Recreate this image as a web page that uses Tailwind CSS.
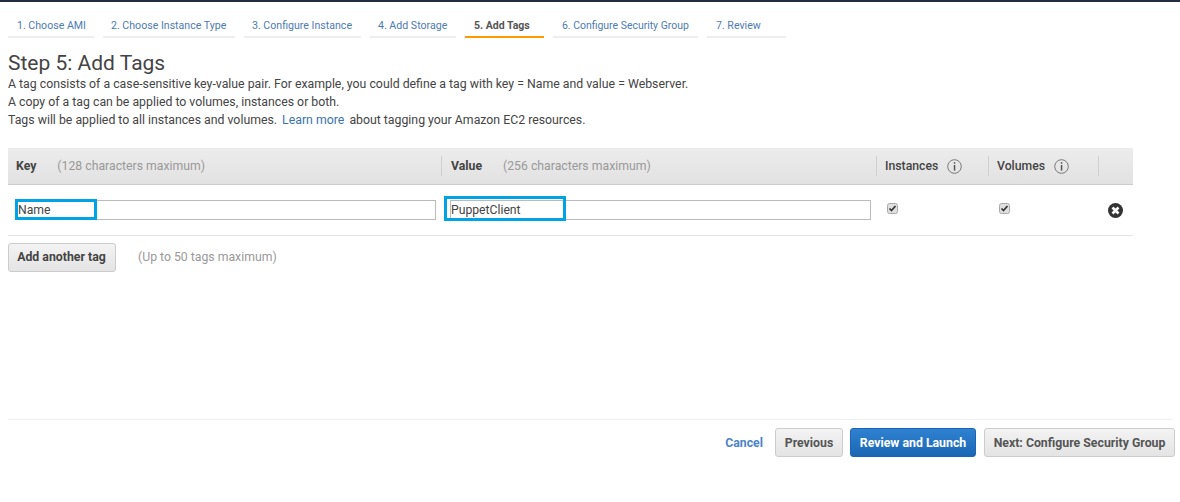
<!DOCTYPE html>
<html lang="en">
<head>
    <meta charset="UTF-8">
    <title>Step 5: Add Tags</title>
    <script src="https://cdn.jsdelivr.net/npm/@tailwindcss/browser@4"></script>
</head>
<body class="h-[502px] w-[1180px] overflow-hidden bg-white font-['Roboto',sans-serif] text-[#444]">
    <!-- Top bar -->
    <div class="h-[2px] bg-[#232f3e]"></div>

    <!-- Wizard steps -->
    <div class="flex gap-[9px] pl-[8px] pt-[10px] text-[10.6px]">
        <div class="h-[26px] w-[86px] border-b-2 border-[#eee] pl-[9px] pt-[7px] leading-[13px] text-[#4d7bb5]">1. Choose AMI</div>
        <div class="h-[26px] w-[132px] border-b-2 border-[#eee] pl-[8px] pt-[7px] leading-[13px] text-[#4d7bb5]">2. Choose Instance Type</div>
        <div class="h-[26px] w-[117px] border-b-2 border-[#eee] pl-[8px] pt-[7px] leading-[13px] text-[#4d7bb5]">3. Configure Instance</div>
        <div class="h-[26px] w-[86px] border-b-2 border-[#eee] pl-[8px] pt-[7px] leading-[13px] text-[#4d7bb5]">4. Add Storage</div>
        <div class="h-[26px] w-[79px] border-b-2 border-[#f90] pl-[9px] pt-[7px] text-[10.5px] font-bold leading-[13px] text-[#555]">5. Add Tags</div>
        <div class="h-[26px] w-[145px] border-b-2 border-[#eee] pl-[9px] pt-[7px] text-[10.45px] leading-[13px] text-[#4d7bb5]">6. Configure Security Group</div>
        <div class="h-[26px] w-[79px] border-b-2 border-[#eee] pl-[9px] pt-[7px] leading-[13px] text-[#4d7bb5]">7. Review</div>
    </div>

    <!-- Intro -->
    <div class="px-[8px]">
        <h1 class="mt-[13px] text-[21px] leading-[24px] text-[#444]">Step 5: Add Tags</h1>
        <p class="text-[12.3px] leading-[18px]">A tag consists of a case-sensitive key-value pair. For example, you could define a tag with key = Name and value = Webserver.</p>
        <p class="text-[12.3px] leading-[18px]">A copy of a tag can be applied to volumes, instances or both.</p>
        <p class="text-[12.3px] leading-[18px]">Tags will be applied to all instances and volumes. <a class="mx-[2px] text-[#3b73af]">Learn more</a> about tagging your Amazon EC2 resources.</p>
    </div>

    <!-- Tag table -->
    <div class="mx-[8px] mt-[19px] w-[1125px]">
        <div class="flex h-[37px] items-center border-b border-[#ccc] bg-gradient-to-b from-[#ececec] to-[#e2e2e2] text-[12.25px]">
            <div class="flex h-[20px] w-[433px] items-center pl-[8px]">
                <span class="font-bold">Key</span><span class="ml-[21px] text-[#999]">(128 characters maximum)</span>
            </div>
            <div class="flex h-[20px] w-[435px] items-center border-l border-[#d0d0d0] pl-[9px]">
                <span class="font-bold">Value</span><span class="ml-[21px] text-[#999]">(256 characters maximum)</span>
            </div>
            <div class="flex h-[20px] w-[112px] items-center gap-[9px] border-l border-[#d0d0d0] pl-[8px]">
                <span class="font-medium">Instances</span>
                <svg class="h-[15px] w-[15px]" viewBox="0 0 15 15" fill="none"><circle cx="7.5" cy="7.5" r="6.8" stroke="#777"/><rect x="6.8" y="3.2" width="1.5" height="1.6" fill="#555"/><rect x="6.8" y="6" width="1.5" height="5.6" fill="#555"/></svg>
            </div>
            <div class="flex h-[20px] w-[110px] items-center gap-[9px] border-l border-[#d0d0d0] pl-[8px]">
                <span class="font-medium">Volumes</span>
                <svg class="h-[15px] w-[15px]" viewBox="0 0 15 15" fill="none"><circle cx="7.5" cy="7.5" r="6.8" stroke="#777"/><rect x="6.8" y="3.2" width="1.5" height="1.6" fill="#555"/><rect x="6.8" y="6" width="1.5" height="5.6" fill="#555"/></svg>
            </div>
            <div class="h-[20px] border-l border-[#d0d0d0]"></div>
        </div>

        <div class="relative flex h-[51px] items-center border-b border-[#e4e4e4]">
            <div class="ml-[8px] mt-[-1px] h-[20px] w-[420px] border border-[#bbb] pl-[1px] text-[12.2px] leading-[18px]">Name</div>
            <div class="ml-[14px] mt-[-1px] h-[20px] w-[421px] border border-[#bbb] text-[12.2px] leading-[18px]">PuppetClient</div>

            <!-- Annotation boxes -->
            <div class="absolute left-[7px] top-[14px] h-[21px] w-[82px] border-[3px] border-[#00a4e4]"></div>
            <div class="absolute left-[436px] top-[11px] h-[25px] w-[122px] border-[3px] border-[#00a4e4]"></div>

            <svg class="ml-[16px] mt-[-4px] h-[11px] w-[11px]" viewBox="0 0 11 11"><rect x=".5" y=".5" width="10" height="10" rx="2" fill="#e0e0e0" stroke="#aaa"/><path d="M2.5 5.5l2 2 4-4.5" fill="none" stroke="#333" stroke-width="1.7"/></svg>
            <svg class="ml-[101px] mt-[-4px] h-[11px] w-[11px]" viewBox="0 0 11 11"><rect x=".5" y=".5" width="10" height="10" rx="2" fill="#e0e0e0" stroke="#aaa"/><path d="M2.5 5.5l2 2 4-4.5" fill="none" stroke="#333" stroke-width="1.7"/></svg>
            <svg class="ml-[98px] mt-[1px] h-[15px] w-[15px]" viewBox="0 0 15 15"><circle cx="7.5" cy="7.5" r="7.5" fill="#333"/><path d="M4.5 4.5l6 6M10.5 4.5l-6 6" stroke="#fff" stroke-width="2.6"/></svg>
        </div>

        <div class="mt-[7px] flex items-center">
            <button class="h-[29px] w-[108px] rounded-[3px] border border-[#ccc] bg-gradient-to-b from-[#f3f3f3] to-[#e4e4e4] pr-[1px] text-[12.3px] font-bold text-[#444]">Add another tag</button>
            <span class="ml-[22px] text-[12.25px] text-[#999]">(Up to 50 tags maximum)</span>
        </div>
    </div>

    <!-- Footer actions -->
    <div class="mx-[8px] mt-[147px] flex items-center justify-end border-t border-[#eee] pt-[8px] text-[12.3px] font-bold">
        <a class="mr-[12px] pt-[1px] text-[#4d84c9]">Cancel</a>
        <button class="h-[29px] w-[68px] rounded-[3px] border border-[#ccc] bg-gradient-to-b from-[#f3f3f3] to-[#e4e4e4] pt-[1px] text-[#555]">Previous</button>
        <button class="ml-[7px] h-[29px] w-[126px] rounded-[3px] border border-[#1a66b5] bg-gradient-to-b from-[#2f82d0] to-[#1a66b5] pt-[1px] text-white">Review and Launch</button>
        <button class="ml-[8px] mr-[-3px] h-[29px] w-[191px] rounded-[3px] border border-[#ccc] bg-gradient-to-b from-[#f3f3f3] to-[#e4e4e4] pt-[1px] text-[#555]">Next: Configure Security Group</button>
    </div>
</body>
</html>
